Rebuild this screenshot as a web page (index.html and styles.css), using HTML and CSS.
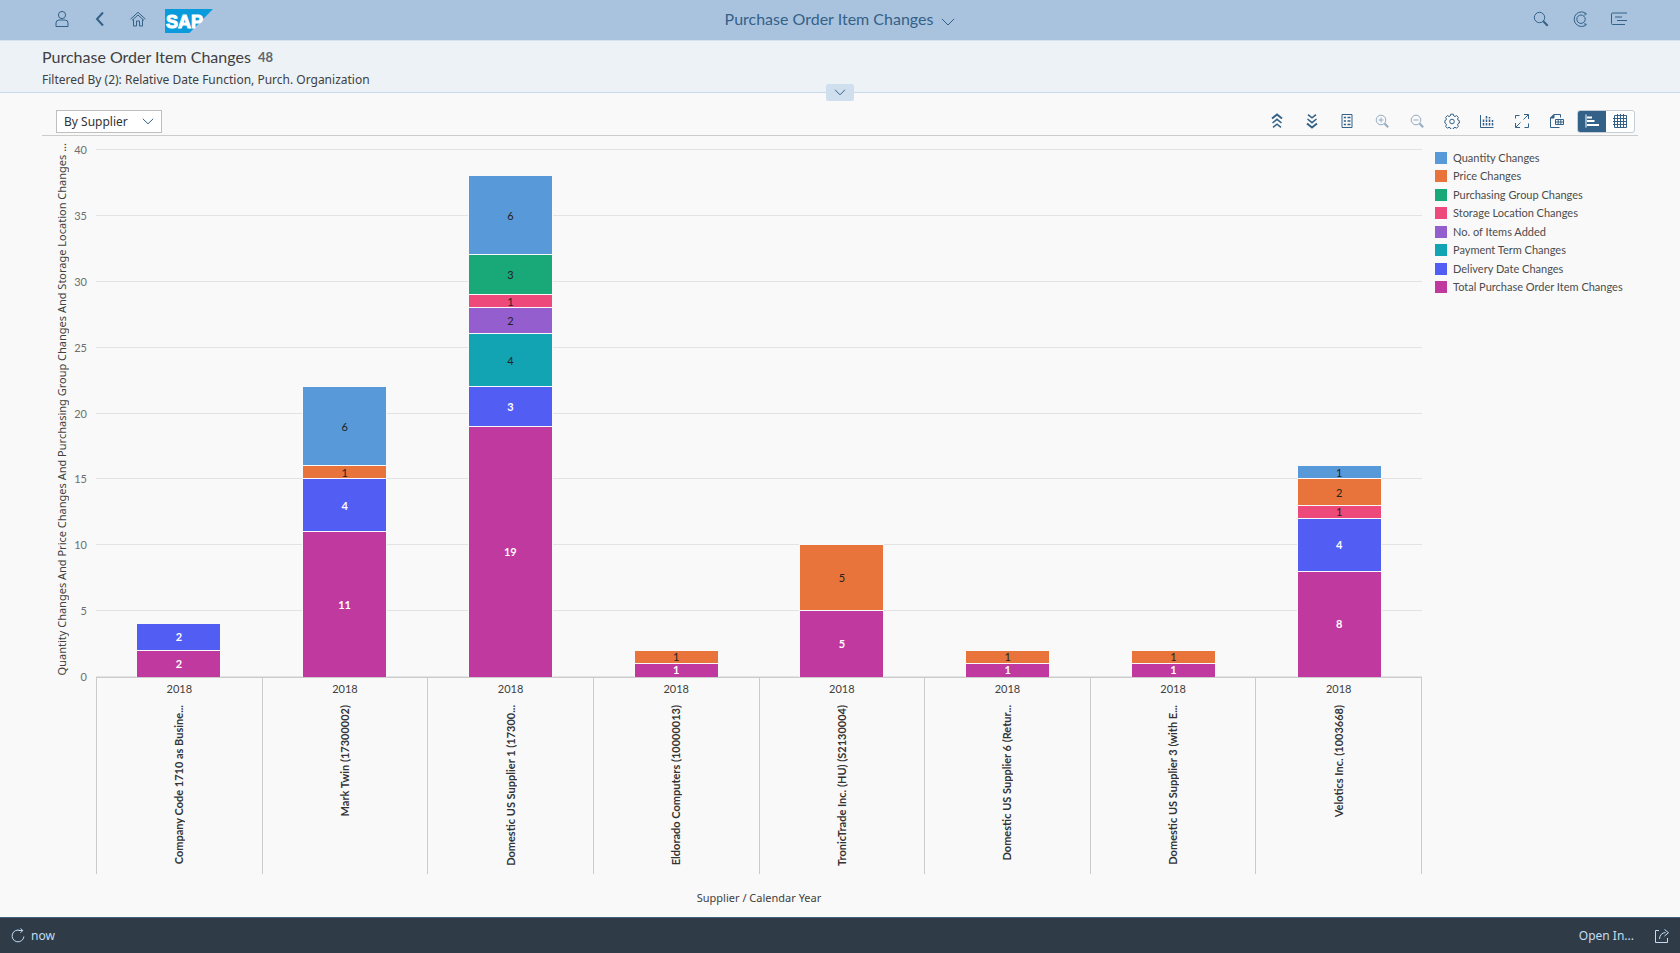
FILE: index.html
```html
<!DOCTYPE html>
<html lang="en">
<head>
<meta charset="utf-8">
<title>Purchase Order Item Changes</title>
<link rel="stylesheet" href="styles.css">
</head>
<body>
<header class="shell">
  <div class="shell-side start">
    <button class="shell-btn" aria-label="User"><svg width="16" height="18" viewBox="0 0 16 18"><circle cx="8" cy="5" r="3.6"/><path d="M2 16.500v-3.500q0-3 3-3h6q3 0 3 3v3.500z"/></svg></button>
    <button class="shell-btn back" aria-label="Back"><svg width="16" height="18" viewBox="0 0 16 18"><path d="M11 2.500 5 9l6 6.500"/></svg></button>
    <button class="shell-btn" aria-label="Home"><svg width="18" height="18" viewBox="0 0 18 18"><path d="M1.500 9.200 9 2.300l7.500 6.900M3 10.400l6-5.400 6 5.400M4.500 9.500v6.500h3v-5h3v5h3V9.500"/></svg></button>
    <a class="logo" href="#" aria-label="SAP home"><svg width="48" height="24" viewBox="0 0 48 24"><path class="logo-bg" d="M0 0h48L24.500 24H0z"/><text class="logo-text" x="1" y="19">SAP</text></svg></a>
  </div>
  <button class="shell-title"><span>Purchase Order Item Changes</span><svg width="14" height="8" viewBox="0 0 14 8"><path d="M.8.8 7 7 13.200.8"/></svg></button>
  <div class="shell-side end">
    <button class="shell-btn" aria-label="Search"><svg width="16" height="16" viewBox="0 0 16 16"><circle cx="6.500" cy="6.500" r="5.200"/><path class="thick" d="m10.300 10.300 4.400 4.400"/></svg></button>
    <button class="shell-btn" aria-label="CoPilot"><svg width="18" height="18" viewBox="0 0 18 18"><path d="M15.800 4.200A7.300 7.300 0 1 0 15.800 14.200M14 3v2.500M14 13v2.500"/><circle cx="10" cy="9.200" r="4.200"/></svg></button>
    <button class="shell-btn" aria-label="Notifications"><svg width="18" height="16" viewBox="0 0 18 16"><path d="M17 2H2.500q-1 0-1 1v9.500q0 1 1 1H15M5 6h7M7 9.500h10"/></svg></button>
  </div>
</header>

<section class="page-head">
  <h1>Purchase Order Item Changes <span class="count">48</span></h1>
  <p>Filtered By (2): Relative Date Function, Purch. Organization</p>
  <button class="expand" aria-label="Expand header"><svg width="12" height="7" viewBox="0 0 12 7"><path d="m1 .8 5 5 5-5"/></svg></button>
</section>

<main>
  <div class="toolbar">
    <label class="picker"><select aria-label="View by"><option>By Supplier</option></select><svg width="12" height="7" viewBox="0 0 12 7"><path d="m.8.8 5.200 5 5.200-5"/></svg></label>
    <div class="tools">
      <button class="tool" aria-label="Drill up"><svg width="16" height="16" viewBox="0 0 16 16"><path class="bold" d="m3 5.500 5-4 5 4"/><path class="mid" d="m3.500 10 4.500-3.700 4.500 3.700M4 14.300l4-3.200 4 3.200"/></svg></button>
      <button class="tool" aria-label="Drill down"><svg width="16" height="16" viewBox="0 0 16 16"><path class="mid" d="m4 1.700 4 3.200 4-3.200M3.500 6 8 9.700 12.500 6"/><path class="bold" d="m3 10.500 5 4 5-4"/></svg></button>
      <button class="tool" aria-label="Legend"><svg width="16" height="16" viewBox="0 0 16 16"><path d="M3 1.500h10v13H3z"/><path class="mid" d="M4.800 4.500H7M8.500 4.500h3M4.800 8H7M8.500 8h3M4.800 11.500H7M8.500 11.500h3"/></svg></button>
      <button class="tool" aria-label="Zoom in" disabled><svg width="16" height="16" viewBox="0 0 16 16"><circle cx="7" cy="7" r="4.800"/><path d="M4.500 7h5M7 4.500v5"/><path class="bold" d="m10.500 10.500 3.700 3.700"/></svg></button>
      <button class="tool" aria-label="Zoom out" disabled><svg width="16" height="16" viewBox="0 0 16 16"><circle cx="7" cy="7" r="4.800"/><path d="M4.500 7h5"/><path class="bold" d="m10.500 10.500 3.700 3.700"/></svg></button>
      <button class="tool" aria-label="Settings"><svg width="16" height="16" viewBox="0 0 16 16"><path d="M6.700 1.200h2.600l.4 1.700 1.300.6 1.600-.9 1.800 1.800-.9 1.600.6 1.200 1.200.5v2.400l-1.200.5-.6 1.200.9 1.600-1.800 1.800-1.600-.9-1.300.6-.4 1.400H6.700l-.4-1.400-1.300-.6-1.600.9-1.800-1.800.9-1.600-.6-1.200L.900 10V7.700l1-.5.600-1.200-.9-1.600 1.800-1.800 1.600.9 1.300-.6z"/><circle cx="8" cy="8.500" r="2.300"/></svg></button>
      <button class="tool" aria-label="Chart type"><svg width="16" height="16" viewBox="0 0 16 16"><path d="M1.500 2v12.500H14.500"/><path class="mid" d="M4.500 12.500V6M7.500 12.500V2M10.500 12.500V4M13.500 12.500V7" stroke-dasharray="2.600 .9"/></svg></button>
      <button class="tool" aria-label="Full screen"><svg width="16" height="16" viewBox="0 0 16 16"><path d="M1.500 5.500v-3h4M14.500 10.500v4h-4M10 1.500h4.500V6M14.200 1.800 9.500 6.500M1.500 10v4.500H6M1.800 14.200 6.500 9.500"/></svg></button>
      <button class="tool" aria-label="Export"><svg width="16" height="16" viewBox="0 0 16 16"><path d="M10.500 14.500h-9V5L5 1.500h6.500v3"/><path class="fill" d="M1.500 5 5 1.500V5z"/><path d="M6.500 6.500h8v5h-8zM6.500 9h8M9.200 6.500v5M11.800 6.500v5"/></svg></button>
      <div class="segmented">
        <button class="seg-btn on" aria-label="Chart view" aria-pressed="true"><svg width="16" height="16" viewBox="0 0 16 16"><path d="M2 1.500v13"/><path class="bold" d="M3 4.500h5M3 8h7.500M3 12h12"/></svg></button>
        <button class="seg-btn" aria-label="Table view" aria-pressed="false"><svg width="16" height="16" viewBox="0 0 16 16"><path d="M2.500 2.500h12v12h-12zM1 5.500h13.500M1 8.500h13.500M1 11.500h13.500M5.500 1v13.500M8.500 1v13.500M11.500 1v13.500"/></svg></button>
      </div>
    </div>
  </div>

  <div class="chart">
    <div class="y-title"><span>Quantity Changes And Price Changes And Purchasing Group Changes And Storage Location Changes ...</span></div>
    <ol class="y-ticks"><li>40</li><li>35</li><li>30</li><li>25</li><li>20</li><li>15</li><li>10</li><li>5</li><li>0</li></ol>
    <div class="plot">
      <div class="grid-lines"><i></i><i></i><i></i><i></i><i></i><i></i><i></i><i></i><i></i></div>
      <div class="bars">
        <div class="bar"><div class="rest" style="flex-grow:36"></div><div class="s delivery" style="flex-grow:2">2</div><div class="s total" style="flex-grow:2">2</div></div>
        <div class="bar"><div class="rest" style="flex-grow:18"></div><div class="s quantity" style="flex-grow:6">6</div><div class="s price" style="flex-grow:1">1</div><div class="s delivery" style="flex-grow:4">4</div><div class="s total" style="flex-grow:11">11</div></div>
        <div class="bar"><div class="rest" style="flex-grow:2"></div><div class="s quantity" style="flex-grow:6">6</div><div class="s group" style="flex-grow:3">3</div><div class="s storage" style="flex-grow:1">1</div><div class="s items" style="flex-grow:2">2</div><div class="s payment" style="flex-grow:4">4</div><div class="s delivery" style="flex-grow:3">3</div><div class="s total" style="flex-grow:19">19</div></div>
        <div class="bar"><div class="rest" style="flex-grow:38"></div><div class="s price" style="flex-grow:1">1</div><div class="s total" style="flex-grow:1">1</div></div>
        <div class="bar"><div class="rest" style="flex-grow:30"></div><div class="s price" style="flex-grow:5">5</div><div class="s total" style="flex-grow:5">5</div></div>
        <div class="bar"><div class="rest" style="flex-grow:38"></div><div class="s price" style="flex-grow:1">1</div><div class="s total" style="flex-grow:1">1</div></div>
        <div class="bar"><div class="rest" style="flex-grow:38"></div><div class="s price" style="flex-grow:1">1</div><div class="s total" style="flex-grow:1">1</div></div>
        <div class="bar"><div class="rest" style="flex-grow:24"></div><div class="s quantity" style="flex-grow:1">1</div><div class="s price" style="flex-grow:2">2</div><div class="s storage" style="flex-grow:1">1</div><div class="s delivery" style="flex-grow:4">4</div><div class="s total" style="flex-grow:8">8</div></div>
      </div>
    </div>
    <ul class="legend">
      <li><i class="quantity"></i>Quantity Changes</li>
      <li><i class="price"></i>Price Changes</li>
      <li><i class="group"></i>Purchasing Group Changes</li>
      <li><i class="storage"></i>Storage Location Changes</li>
      <li><i class="items"></i>No. of Items Added</li>
      <li><i class="payment"></i>Payment Term Changes</li>
      <li><i class="delivery"></i>Delivery Date Changes</li>
      <li><i class="total"></i>Total Purchase Order Item Changes</li>
    </ul>
    <div class="categories">
      <div class="cat"><span>2018</span><b>Company Code 1710 as Busine...</b></div>
      <div class="cat"><span>2018</span><b>Mark Twin (17300002)</b></div>
      <div class="cat"><span>2018</span><b>Domestic US Supplier 1 (17300...</b></div>
      <div class="cat"><span>2018</span><b>Eldorado Computers (10000013)</b></div>
      <div class="cat"><span>2018</span><b>TronicTrade Inc. (HU) (S2130004)</b></div>
      <div class="cat"><span>2018</span><b>Domestic US Supplier 6 (Retur...</b></div>
      <div class="cat"><span>2018</span><b>Domestic US Supplier 3 (with E...</b></div>
      <div class="cat"><span>2018</span><b>Velotics Inc. (1003668)</b></div>
    </div>
    <div class="x-title">Supplier / Calendar Year</div>
  </div>
</main>

<footer>
  <button class="foot-btn"><svg width="16" height="16" viewBox="0 0 16 16"><path d="M10.500 2.600A5.900 5.900 0 1 0 13.900 8.500M8.500 2.500h3.800M10.500.5l2.300 2-2.300 2.300"/></svg><span>now</span></button>
  <div class="foot-end">
    <button class="foot-btn">Open In...</button>
    <button class="foot-btn" aria-label="Share"><svg width="16" height="16" viewBox="0 0 16 16"><path d="M5 2.500H1.500v12h12V10M5.500 11q.5-6 6-6.500M10.500 1.500l4 3.200-4 3.300"/></svg></button>
  </div>
</footer>
</body>
</html>
```
FILE: styles.css
```css
* { box-sizing: border-box; margin: 0; padding: 0; }

body {
  display: flex;
  flex-direction: column;
  min-height: 100vh;
  background: #f9f9f9;
  color: #404040;
  font-family: "Noto Sans", sans-serif;
  font-size: 12px;
}

button { border: 0; background: none; font: inherit; color: inherit; cursor: pointer; }
ul, ol { list-style: none; }
svg { display: block; fill: none; stroke: currentColor; stroke-width: 1; }

/* Shell bar */
.shell {
  display: grid;
  grid-template-columns: 1fr auto 1fr;
  align-items: start;
  height: 41px;
  padding: 0 42px;
  background: #a9c3df;
  border-bottom: 1px solid #d5e3f1;
  color: #346187;
}
.shell-side { display: flex; align-items: center; height: 38px; }
.shell-side.start { padding-left: 1px; }
.shell-side.end { justify-content: flex-end; }
.shell-btn { display: flex; align-items: center; justify-content: center; width: 38px; height: 38px; }
.end .shell-btn { width: 39px; }
.shell .back svg { stroke-width: 2; }
.shell .thick { stroke-width: 2; }
.logo { margin-left: 8px; padding-top: 3px; }
.logo-bg { fill: #0a9bdc; stroke: none; }
.logo-text { fill: #fff; stroke: #fff; stroke-width: 1; font: bold 18px "Liberation Sans", sans-serif; }
.shell-title {
  display: flex;
  align-items: center;
  gap: 8px;
  height: 38px;
  font-family: Lato, sans-serif;
  font-size: 16px;
  line-height: 20px;
}
.shell-title svg { margin-top: 5px; }

/* Page header */
.page-head {
  position: relative;
  height: 52px;
  padding: 5px 42px 0;
  background: #edf2f7;
  border-bottom: 1px solid #c8d9ec;
}
.page-head h1 { font-family: Lato, sans-serif; font-size: 16px; font-weight: 400; line-height: 22px; }
.count { margin-left: 3px; color: #5c666e; font-size: 13px; font-weight: 700; vertical-align: 1px; }
.page-head p { line-height: 24px; }
.expand {
  position: absolute;
  bottom: -9px;
  left: calc(50% - 14px);
  display: flex;
  align-items: center;
  justify-content: center;
  width: 28px;
  height: 17px;
  border-radius: 2px;
  background: #d0dfee;
  color: #346187;
}

/* Toolbar */
main { display: flex; flex: 1; flex-direction: column; padding: 0 42px 12px; }
.toolbar {
  display: flex;
  justify-content: space-between;
  align-items: center;
  height: 43px;
  padding: 14px 3px 0 14px;
  border-bottom: 1px solid #ccc;
}
.picker { display: grid; width: 106px; height: 23px; align-items: center; color: #346187; }
.picker select {
  grid-area: 1 / 1;
  width: 100%;
  height: 100%;
  padding-left: 7px;
  border: 1px solid #bfbfbf;
  border-radius: 0;
  background: #fff;
  color: #333;
  font: inherit;
  appearance: none;
}
.picker svg { grid-area: 1 / 1; justify-self: end; margin-right: 8px; pointer-events: none; }
.tools { display: flex; align-items: center; color: #346187; }
.tool { display: flex; align-items: center; justify-content: center; width: 35px; height: 23px; }
.tool:disabled { opacity: .5; }
.bold { stroke-width: 2; }
.mid { stroke-width: 1.5; }
.fill { fill: currentColor; }
.segmented { display: flex; margin-left: 3px; border: 1px solid #c4cdd5; border-radius: 3px; background: #fff; overflow: hidden; }
.seg-btn { display: flex; align-items: center; justify-content: center; width: 28px; height: 21px; }
.seg-btn.on { background: #346187; color: #fff; }

/* Chart */
.chart {
  display: grid;
  flex: 1;
  grid-template-columns: 14px 18px minmax(0, 1fr) 216px;
  grid-template-rows: minmax(200px, 1fr) auto auto;
  padding: 13px 0 0 13px;
  font-family: Lato, sans-serif;
  font-size: 11px;
  line-height: 14px;
}
.y-title {
  display: flex;
  flex-direction: column;
  justify-content: flex-end;
  height: 0;
  min-height: 100%;
  padding-bottom: 2px;
  font-family: "Noto Sans", sans-serif;
}
.y-title span { writing-mode: vertical-rl; transform: rotate(180deg); white-space: nowrap; }
.y-ticks { display: flex; flex-direction: column; justify-content: space-between; text-align: right; color: #6e6e6e; }
.y-ticks li { height: 1px; line-height: 1px; }
.plot { display: grid; margin-left: 9px; }
.grid-lines { grid-area: 1 / 1; display: flex; flex-direction: column; justify-content: space-between; }
.grid-lines i { height: 1px; background: #e3e3e3; }
.bars { grid-area: 1 / 1; display: grid; grid-template-columns: repeat(8, 1fr); justify-items: center; padding-top: 1px; }
.bar { display: flex; flex-direction: column; width: 50%; }
.rest, .s { flex-basis: 0; min-height: 0; }
.s {
  display: flex;
  align-items: center;
  justify-content: center;
  box-shadow: 0 0 0 1px #f9f9f9;
  color: #222;
  line-height: 12px;
}
.s.delivery, .s.total { color: #fff; font-weight: 700; }
.quantity { background: #5899da; }
.price { background: #e8743b; }
.group { background: #19a979; }
.storage { background: #ed4a7b; }
.items { background: #945ecf; }
.payment { background: #13a4b4; }
.delivery { background: #525df4; }
.total { background: #bf399e; }

.legend {
  display: flex;
  flex-direction: column;
  justify-content: space-between;
  height: 141px;
  margin: 3px 0 0 13px;
  color: #4c4c4c;
}
.legend li { display: flex; align-items: center; gap: 6px; line-height: 12px; white-space: nowrap; }
.legend i { width: 12px; height: 12px; }

.categories {
  grid-column: 3;
  display: grid;
  grid-template-columns: repeat(8, 1fr);
  margin-left: 9px;
  border-top: 1px solid #ccc;
  border-right: 1px solid #ccc;
}
.cat { display: flex; flex-direction: column; align-items: center; gap: 9px; height: 196px; padding-top: 4px; border-left: 1px solid #ccc; }
.cat b { writing-mode: vertical-rl; transform: rotate(180deg); white-space: nowrap; color: #333; }
.x-title { grid-column: 3; margin-left: 9px; padding-top: 17px; font-family: "Noto Sans", sans-serif; text-align: center; }

/* Footer */
footer {
  display: flex;
  align-items: center;
  justify-content: space-between;
  height: 36px;
  padding: 0 10px;
  background: #2f3c48;
  border-top: 1px solid #46637c;
  color: #c3dcf3;
}
.foot-btn { display: flex; align-items: center; gap: 5px; }
.foot-end { display: flex; align-items: center; gap: 20px; }
```
